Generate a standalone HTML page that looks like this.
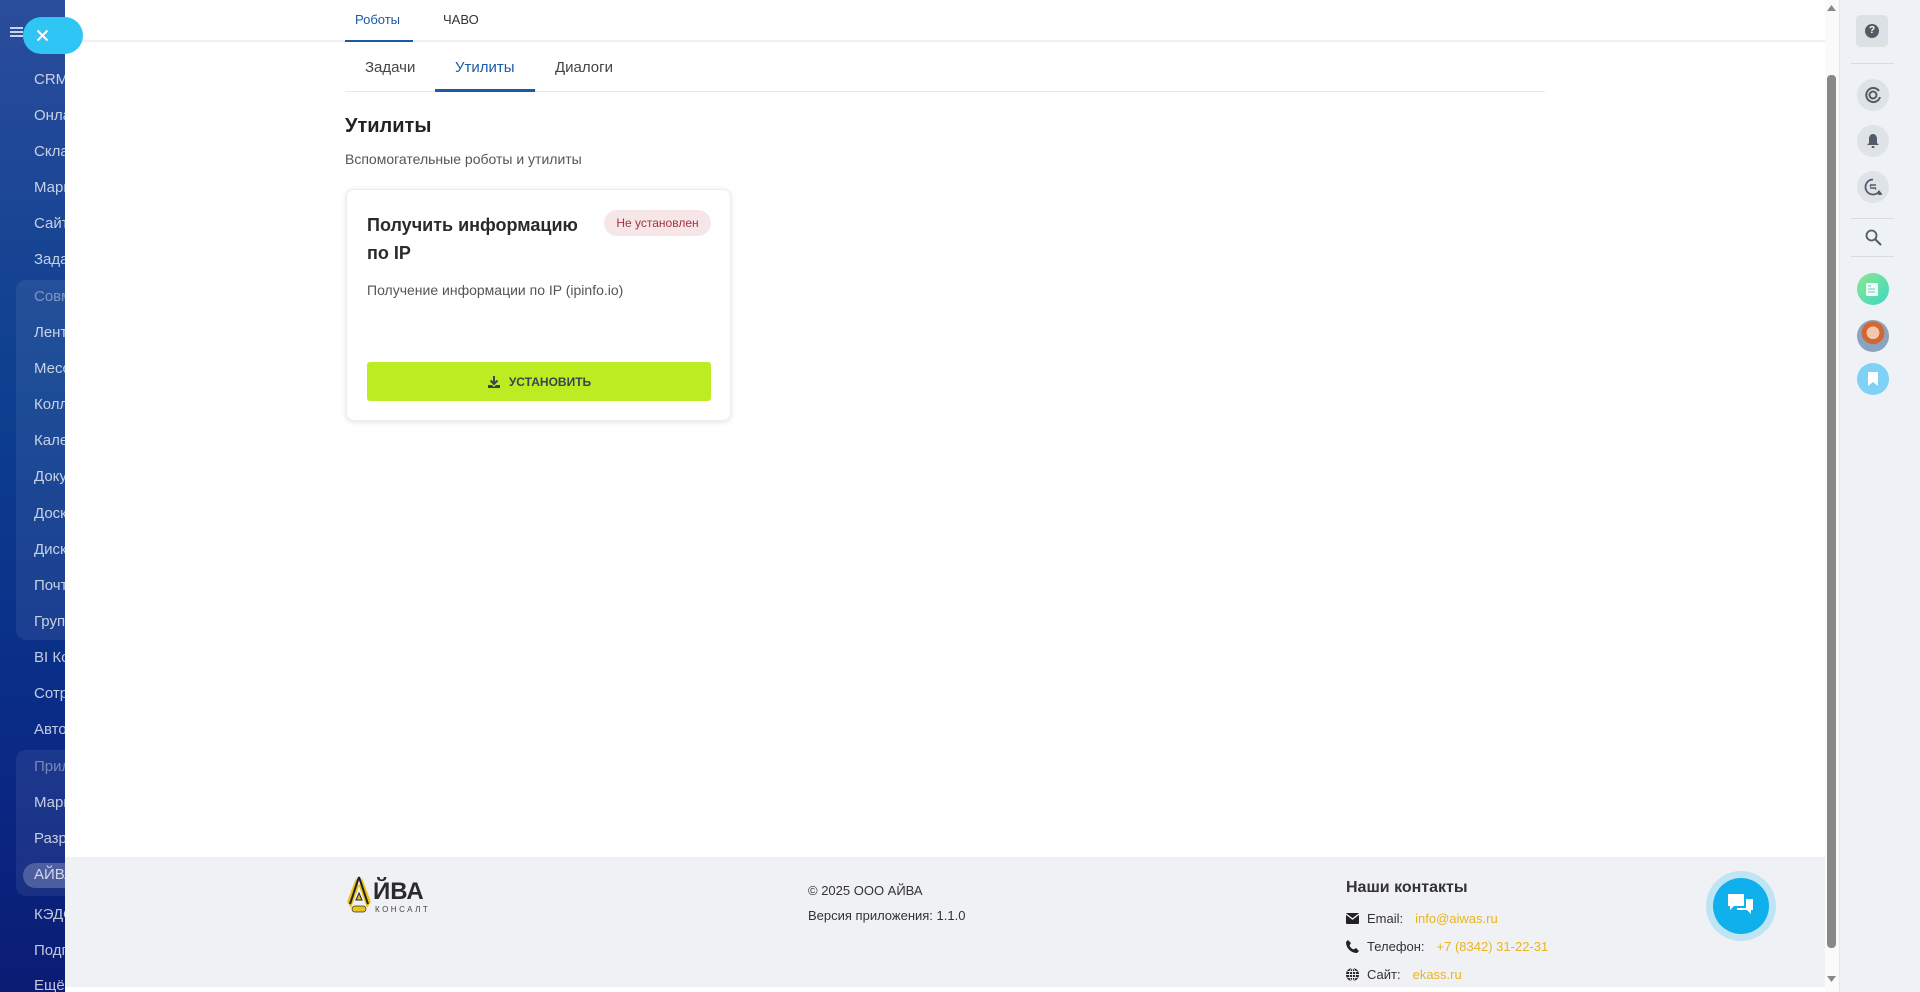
<!DOCTYPE html>
<html><head><meta charset="utf-8"><style>
*{box-sizing:border-box;margin:0;padding:0}
body{width:1920px;height:992px;overflow:hidden;font-family:"Liberation Sans","Noto Sans CJK SC",sans-serif;background:#fff;position:relative;color:#333}
.abs{position:absolute}
#side{left:0;top:0;width:65px;height:992px;background:linear-gradient(180deg,#2b4d9c 0%,#0c3f8f 40%,#0a2a86 75%,#0a1c74 100%);overflow:hidden}
#side .it{position:absolute;left:34px;font-size:15px;color:rgba(255,255,255,.75);white-space:nowrap}
#side .grp{position:absolute;left:16px;width:80px;background:rgba(255,255,255,.07);border-radius:10px}
.tab{position:absolute;font-size:13px;color:#333}
.ic{position:absolute;width:32px;height:32px;border-radius:50%;background:#dfe3e8;left:1857px;display:flex;align-items:center;justify-content:center}
.hr{position:absolute;left:1851px;width:43px;height:1px;background:#d8dce2}
.row{position:absolute;left:1346px;font-size:13px;color:#333;display:flex;align-items:center;gap:8px}
.row a{color:#e9b51d;text-decoration:none;margin-left:4px}
</style></head><body>
<div id="side" class="abs">
 <div class="abs" style="left:10px;top:27px;width:13px;height:2px;background:#c9d4ea;box-shadow:0 4px 0 #c9d4ea,0 8px 0 #c9d4ea"></div>
 <div class="grp" style="top:280px;height:360px"></div>
 <div class="grp" style="top:750px;height:146px"></div>
 <div class="abs" style="left:23px;top:863px;width:60px;height:25px;border-radius:13px;background:rgba(255,255,255,.22)"></div>
 <div class="it" style="top:71px">CRM</div><div class="it" style="top:107px">Онлайн</div><div class="it" style="top:143px">Склад</div><div class="it" style="top:179px">Маркет</div><div class="it" style="top:215px">Сайты</div><div class="it" style="top:251px">Задачи</div>
 <div class="it" style="top:288px;color:rgba(255,255,255,.4)">Совместная</div><div class="it" style="top:324px">Лента</div><div class="it" style="top:360px">Мессенджер</div><div class="it" style="top:396px">Коллаб</div><div class="it" style="top:432px">Календарь</div><div class="it" style="top:468px">Документы</div><div class="it" style="top:505px">Доска</div><div class="it" style="top:541px">Диск</div><div class="it" style="top:577px">Почта</div><div class="it" style="top:613px">Группы</div>
 <div class="it" style="top:649px">BI Конструктор</div><div class="it" style="top:685px">Сотрудники</div><div class="it" style="top:721px">Автоматизация</div>
 <div class="it" style="top:758px;color:rgba(255,255,255,.4)">Приложения</div><div class="it" style="top:794px">Маркет</div><div class="it" style="top:830px">Разработчикам</div><div class="it" style="top:866px">АЙВА</div>
 <div class="it" style="top:906px">КЭДО</div><div class="it" style="top:942px">Подписи</div><div class="it" style="top:977px">Ещё</div>
</div>
<div class="abs" style="left:23px;top:17px;width:60px;height:37px;border-radius:19px;background:#2fc6f6;z-index:3">
 <svg class="abs" style="left:13px;top:12px" width="13" height="13" viewBox="0 0 13 13"><path d="M1.5 1.5L11.5 11.5M11.5 1.5L1.5 11.5" stroke="#fff" stroke-width="2"/></svg>
</div>

<!-- header -->
<div class="abs" style="left:65px;top:40px;width:1760px;height:2px;background:#eef0f3"></div>
<div class="tab" style="left:355px;top:12px;color:#1a5aa8">Роботы</div>
<div class="abs" style="left:345px;top:40px;width:68px;height:2px;background:#1a5aa8"></div>
<div class="tab" style="left:443px;top:12px">ЧАВО</div>
<div class="tab" style="left:365px;top:59px;font-size:15px;color:#444">Задачи</div>
<div class="tab" style="left:455px;top:59px;font-size:15px;color:#1a5aa8">Утилиты</div>
<div class="tab" style="left:555px;top:59px;font-size:15px;color:#444">Диалоги</div>
<div class="abs" style="left:345px;top:91px;width:1200px;height:1px;background:#e8eaee"></div>
<div class="abs" style="left:435px;top:89px;width:100px;height:3px;background:#1a5aa8"></div>

<div class="abs" style="left:345px;top:115px;font-size:20px;font-weight:bold;color:#222">Утилиты</div>
<div class="abs" style="left:345px;top:151px;font-size:14px;color:#555">Вспомогательные роботы и утилиты</div>

<div class="abs" style="left:346px;top:189px;width:385px;height:232px;border-radius:8px;background:#fff;box-shadow:0 1px 6px rgba(0,0,0,.12);border:1px solid #eceef1">
 <div class="abs" style="left:20px;top:21px;font-size:18px;font-weight:bold;color:#2a2a2a;line-height:28px;width:230px">Получить информацию по IP</div>
 <div class="abs" style="left:257px;top:20px;width:107px;height:26px;border-radius:13px;background:#f7e6e8;color:#a33340;font-size:12px;line-height:26px;text-align:center">Не установлен</div>
 <div class="abs" style="left:20px;top:92px;font-size:14px;color:#555">Получение информации по IP (ipinfo.io)</div>
 <div class="abs" style="left:20px;top:172px;width:344px;height:39px;border-radius:3px;background:#bbed22;display:flex;align-items:center;justify-content:center;gap:8px;font-size:12px;font-weight:bold;color:#3c4350">
  <svg width="14" height="14" viewBox="0 0 14 14"><path d="M7 1V9M3.5 5.5L7 9L10.5 5.5" stroke="#3c4350" stroke-width="2" fill="none"/><path d="M1 10h4l2 2l2-2h4v3H1z" fill="#3c4350"/></svg>УСТАНОВИТЬ</div>
</div>

<!-- footer -->
<div class="abs" style="left:65px;top:857px;width:1760px;height:130px;background:#f0f1f5"></div>
<svg class="abs" style="left:345px;top:874px" width="90" height="46" viewBox="0 0 90 46">
 <path d="M11 4L2 28L6 34L14 12z" fill="#e9c21a"/><path d="M17 4L26 28L22 34L14 12z" fill="#e9c21a"/>
 <path d="M14 3L5 30M14 3L23 30" stroke="#222" stroke-width="2"/><path d="M11 26L14 19L17 26z" fill="#e9c21a" stroke="#222"/>
 <rect x="7" y="32" width="14" height="6" rx="3" fill="#e9c21a" stroke="#333" stroke-width=".7"/>
 <text x="28" y="25" font-family="Liberation Sans" font-weight="bold" font-size="24" fill="#2a2a2a">ЙВА</text>
 <text x="30" y="38" font-family="Liberation Sans" font-size="8" letter-spacing="2.5" fill="#444">КОНСАЛТ</text>
</svg>
<div class="abs" style="left:808px;top:883px;font-size:13px;color:#333">© 2025 ООО АЙВА</div>
<div class="abs" style="left:808px;top:908px;font-size:13px;color:#333">Версия приложения: 1.1.0</div>
<div class="abs" style="left:1346px;top:879px;font-size:16px;font-weight:bold;color:#333">Наши контакты</div>
<div class="row" style="top:911px"><svg width="13" height="11" viewBox="0 0 13 11"><rect width="13" height="11" rx="1" fill="#222"/><path d="M0 1l6.5 5L13 1" stroke="#f0f1f5" stroke-width="1.4" fill="none"/></svg>Email: <a>info@aiwas.ru</a></div>
<div class="row" style="top:939px"><svg width="13" height="13" viewBox="0 0 13 13"><path d="M2 0l3 3-1.5 2.5a8 8 0 004 4L10 8l3 3-2 2C5 13 0 8 0 2z" fill="#222"/></svg>Телефон: <a>+7 (8342) 31-22-31</a></div>
<div class="row" style="top:967px"><svg width="13" height="13" viewBox="0 0 13 13"><circle cx="6.5" cy="6.5" r="6.5" fill="#222"/><path d="M0 6.5h13M6.5 0v13M1.5 3.5h10M1.5 9.5h10" stroke="#f0f1f5" stroke-width=".9"/><ellipse cx="6.5" cy="6.5" rx="3" ry="6.3" stroke="#f0f1f5" stroke-width=".9" fill="none"/></svg>Сайт: <a>ekass.ru</a></div>
<div class="abs" style="left:1706px;top:871px;width:70px;height:70px;border-radius:50%;background:#bfe5f5"></div>
<div class="abs" style="left:1713px;top:878px;width:56px;height:56px;border-radius:50%;background:#0fb0ec"></div>
<svg class="abs" style="left:1727px;top:893px" width="28" height="26" viewBox="0 0 28 26"><path d="M1 1h16v12H7l-4 4v-4H1z" fill="#fff"/><path d="M19 6h7v11h-2v4l-4-4H10v-2h9z" fill="#fff"/></svg>

<!-- scrollbar -->
<div class="abs" style="left:1825px;top:0;width:14px;height:992px;background:#fafafa"></div>
<div class="abs" style="left:1827px;top:75px;width:9px;height:873px;border-radius:4px;background:#888"></div>
<svg class="abs" style="left:1827px;top:5px" width="9" height="6"><path d="M0 6L4.5 0L9 6z" fill="#888"/></svg>
<svg class="abs" style="left:1827px;top:976px" width="9" height="6"><path d="M0 0L4.5 6L9 0z" fill="#888"/></svg>

<!-- right panel -->
<div class="abs" style="left:1839px;top:0;width:81px;height:992px;background:#eef1f5;border-left:1px solid #e3e6ea"></div>
<div class="abs" style="left:1856px;top:15px;width:32px;height:32px;border-radius:5px;background:#dde0e4;display:flex;align-items:center;justify-content:center"><div style="width:14px;height:14px;border-radius:50%;background:#525c69;color:#fff;font-size:10px;font-weight:bold;text-align:center;line-height:14px">?</div></div>
<div class="hr" style="top:63px"></div>
<div class="ic" style="top:79px"><svg width="18" height="18" viewBox="0 0 18 18"><path d="M15 5A7 7 0 1 0 16 11" stroke="#525c69" stroke-width="2" fill="none"/><circle cx="9" cy="9" r="3.5" stroke="#525c69" stroke-width="2" fill="none"/></svg></div>
<div class="ic" style="top:125px"><svg width="14" height="16" viewBox="0 0 14 16"><path d="M7 1C4 1 3 4 3 6v4L1 12h12l-2-2V6c0-2-1-5-4-5z" fill="#525c69"/><rect x="5.5" y="13" width="3" height="2" rx="1" fill="#525c69"/></svg></div>
<div class="ic" style="top:171px"><svg width="18" height="18" viewBox="0 0 18 18"><path d="M9 1.5a7.5 7.5 0 1 0 6 12l2 2.5h-3" stroke="#525c69" stroke-width="1.8" fill="none"/><path d="M6 7h6M6 10h6M7 7l-1 1.5M11 10l1 1.5" stroke="#525c69" stroke-width="1.5"/></svg></div>
<div class="hr" style="top:218px"></div>
<svg class="abs" style="left:1865px;top:229px" width="17" height="17" viewBox="0 0 17 17"><circle cx="6.5" cy="6.5" r="5" stroke="#525c69" stroke-width="1.8" fill="none"/><path d="M10 10l6 6" stroke="#525c69" stroke-width="2"/></svg>
<div class="hr" style="top:256px"></div>
<div class="ic" style="top:273px;background:linear-gradient(135deg,#8ce890,#3fd6c2)"><svg width="16" height="16"><rect x="1" y="2" width="12" height="13" rx="1" fill="#fff" opacity=".9"/><path d="M3 5h3M3 8h7M3 11h7" stroke="#7fd5c6" stroke-width="1.3"/></svg></div>
<div class="ic" style="top:320px;background:radial-gradient(circle at 50% 40%,#f1c7b0 0 25%,#d4662f 26% 45%,#8aa3c0 46%)"></div>
<div class="ic" style="top:363px;background:#7fd2f5"><svg width="12" height="14"><path d="M1 0h10v14L6 10L1 14z" fill="#fff"/></svg></div>
</body></html>
